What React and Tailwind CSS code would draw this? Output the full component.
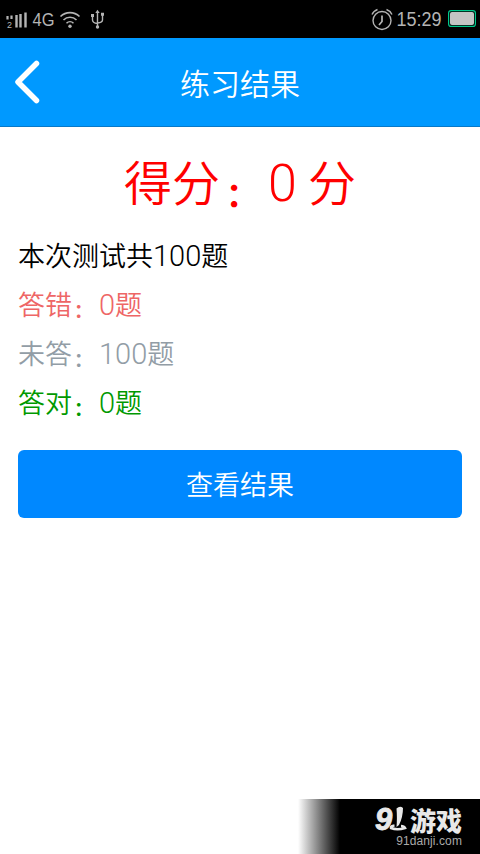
function StatusBar() {
  return (
    <div className="flex h-[38px] items-center justify-between bg-black text-[#b4b4b4]">
      <svg className="h-[38px] w-[110px]" viewBox="0 0 110 38" fill="none" stroke="currentColor">
        <path d="M7.500 16v3.500M11.500 15.500v3.500" strokeWidth={2.2} />
        <path d="M16.500 15v12.500M20.500 14v13.500M25.500 12.500v15" strokeWidth={2.4} />
        <text x="7" y="28" fontSize="9" fontWeight="400" fontFamily="Liberation Sans" fill="currentColor" stroke="none">2</text>
        <text x="32.500" y="26" fontSize="19" textLength="22" lengthAdjust="spacingAndGlyphs" fontFamily="Liberation Sans" fill="currentColor" stroke="none">4G</text>
        <path d="M60.500 16.500a13.500 13.500 0 0 1 19 0M63.500 20a9.200 9.200 0 0 1 13 0M66.500 23.200a5 5 0 0 1 7 0" strokeWidth={1.6} />
        <circle cx="70" cy="26.300" r="1.700" fill="currentColor" stroke="none" />
        <path d="M97.500 12v14.500M92.500 16v4q0 3 5 3.500M102.500 15v5q0 2.500-5 3" strokeWidth={1.4} />
        <path d="M95.300 13l2.200-3.300 2.200 3.300z" fill="currentColor" stroke="none" />
        <path d="M91 14h3v3h-3zM101 12.800h3v3h-3z" fill="currentColor" stroke="none" />
        <circle cx="97.500" cy="27" r="1.700" fill="currentColor" stroke="none" />
      </svg>
      <svg className="h-[38px] w-[110px]" viewBox="370 0 110 38" fill="none" stroke="currentColor">
        <circle cx="382" cy="20.500" r="9" strokeWidth={1.4} />
        <path d="M372 14.500q1.500-3.500 5.500-5M386.500 9.500q4 1.500 5.500 5" strokeWidth={1.4} />
        <path d="M382 15.500v6l-3 3.500" strokeWidth={1.7} />
        <text x="396.500" y="26" fontSize="19.500" textLength="45" lengthAdjust="spacingAndGlyphs" fontFamily="Liberation Sans" fill="currentColor" stroke="none">15:29</text>
        <rect x="448.600" y="10.600" width="26.800" height="15.800" rx="2.500" stroke="#00c88c" strokeWidth={1.2} />
        <rect x="450" y="12" width="24" height="13" rx="2" fill="#c4c4c4" stroke="none" />
      </svg>
    </div>
  )
}

function Header() {
  return (
    <header className="grid h-[89px] grid-cols-[60px_1fr_60px] items-center border-b border-[#0879c8] bg-[#0099ff] text-white">
      <svg className="ml-3 h-[46px] w-[30px]" viewBox="0 0 30 46" fill="none" stroke="currentColor" strokeWidth={5.5} strokeLinecap="round" strokeLinejoin="round">
        <path d="M24.500 4.500L6 23l18.500 18.500" />
      </svg>
      <h1 className="text-center text-[30px] leading-none">练习结果</h1>
    </header>
  )
}

// compact colon that still takes a full em of width
function Colon({ className }) {
  return (
    <span className="inline-block w-[1em] leading-none">
      <span className={`text-[0.7em] ${className}`}>：</span>
    </span>
  )
}

const rows = [
  { label: '答错', count: 0, color: 'text-[#ee6666]' },
  { label: '未答', count: 100, color: 'text-[#929da6]' },
  { label: '答对', count: 0, color: 'text-[#009900]' },
]

function Watermark() {
  return (
    <div className="absolute right-0 bottom-0 flex h-[55px] w-[182px] flex-col items-end bg-[linear-gradient(to_right,#fff_0,#000_42px)] pt-[7px] pr-[18px] text-[#e8e8e8]">
      <div className="flex h-[27px] items-center">
        <span className="flex w-[35px] font-['Liberation_Sans',sans-serif] text-[31px] leading-[27px] font-bold italic [-webkit-text-stroke:0.8px_#e8e8e8]">
          9
          <svg className="-ml-[3px] h-[26px] w-[18px] shrink-0" viewBox="0 0 18 26" fill="currentColor">
            <path d="M7.500 2.500q3.500-3 6.500-.5 0 9-4 17l-2.500 2q.8-9 0-18.500z" />
            <path d="M5.500 19.500q-4 .5-3.500 2.500 6 2.500 14 0-1-2-4-2" fill="none" stroke="currentColor" strokeWidth={2.6} />
          </svg>
        </span>
        <span className="text-[26px] leading-[27px] font-black">游戏</span>
      </div>
      <span className="mt-px font-['Liberation_Sans',sans-serif] text-[12px] leading-[15px] font-normal tracking-[0.1px] text-[#aaa]">91danji.com</span>
    </div>
  )
}

export default function App() {
  return (
    <div className="relative flex h-[854px] w-[480px] flex-col overflow-hidden bg-white font-['Noto_Sans_CJK_SC',sans-serif] font-[350]">
      <StatusBar />
      <Header />
      <main className="px-[18px] pt-[21px]">
        <p className="h-[64px] text-center text-[48px] leading-[64px] whitespace-pre text-[#ff0000]">
          得分<Colon className="-ml-[3px] align-[-0.17em] font-bold" /><span className="font-['Roboto',sans-serif] text-[52px] tracking-[-0.8px]">0 </span>分
        </p>
        <div className="mt-[18px]">
          <p className="h-[49px] text-[27px] leading-[49px] text-black">
            本次测试共<span className="font-['Roboto',sans-serif] text-[29px]">100</span>题
          </p>
          {rows.map((row) => (
            <p key={row.label} className={`h-[49px] text-[27px] leading-[49px] ${row.color}`}>
              {row.label}<Colon className="ml-0.5 align-[-0.15em] font-bold" />
              <span className="font-['Roboto',sans-serif] text-[29px]">{row.count}</span>题
            </p>
          ))}
        </div>
        <button className="mt-[24px] h-[68px] w-full rounded-md bg-[#0088ff] text-[27px] text-white">查看结果</button>
      </main>
      <Watermark />
    </div>
  )
}
